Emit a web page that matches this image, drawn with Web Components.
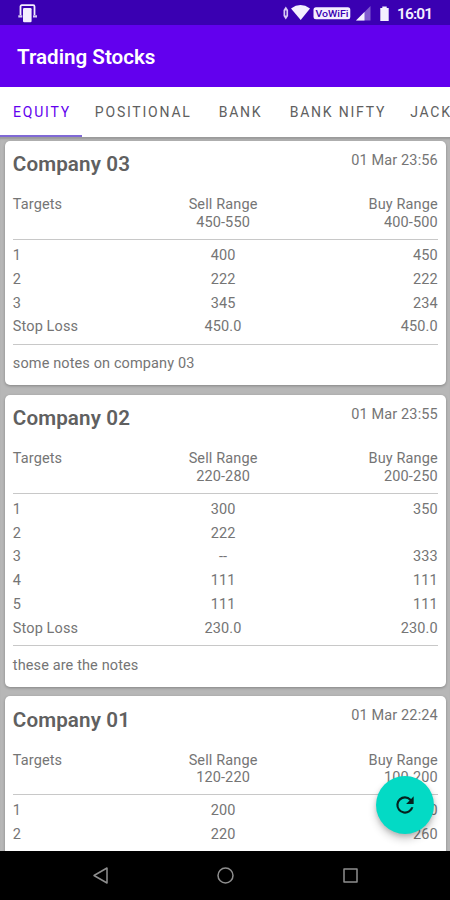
<!DOCTYPE html>
<html lang="en">
<head>
<meta charset="utf-8">
<title>Trading Stocks</title>
<style>
body { margin: 0; font-family: Roboto, "Liberation Sans", sans-serif; }
</style>
</head>
<body>
<trading-app></trading-app>
<script>
const define = (name, html, setup) => {
  const template = document.createElement('template');
  template.innerHTML = html;
  customElements.define(name, class extends HTMLElement {
    constructor() {
      super();
      this.attachShadow({ mode: 'open' }).append(template.content.cloneNode(true));
    }
    connectedCallback() { if (setup) setup(this, this.shadowRoot); }
  });
};

define('status-bar', `
<style>
:host { display: flex; height: 25px; background: #3a00b2; color: #f4efff; }
svg { display: block; width: 450px; height: 25px; }
text { font-family: Roboto, "Liberation Sans", sans-serif; }
</style>
<svg viewBox="0 0 450 25" fill="currentColor">
  <path d="M20.500 15V6.500A1.300 1.300 0 0 1 21.800 5.200h11.400A1.300 1.300 0 0 1 34.500 6.500V15" fill="none" stroke="currentColor" stroke-width="1.800"/>
  <path d="M18.300 15.200h4v2.300h-4zM33 15.200h4v2.300h-4z" opacity=".85"/>
  <rect x="23" y="8" width="8.600" height="14.300" rx="1.200"/>
  <path d="M285.800 6.500l2.300 3.500v6l-2.300 3.500-2.300-3.500v-6z" opacity=".85"/>
  <path d="M285.800 10.500v5" stroke="#3a00b2" stroke-width="1.200"/>
  <path d="M291 8.400Q300.500 1.600 310 8.400L300.700 20z"/>
  <rect x="313.500" y="7.300" width="36.800" height="12" rx="2.500"/>
  <text x="315.500" y="16.800" font-size="9.500" font-weight="500" fill="#3a00b2" textLength="33" lengthAdjust="spacingAndGlyphs">VoWiFi</text>
  <path d="M356 20.500L370.500 6v14.500z" opacity=".38"/>
  <path d="M356 20.500l8.500-8.500v8.500z"/>
  <path d="M380.300 8h2v-1.500h4.400V8h2v13h-8.400z"/>
  <text x="397" y="18.700" font-size="15.500" font-weight="600" textLength="36">16:01</text>
</svg>`);

define('app-bar', `
<style>
:host { display: flex; align-items: center; height: 61.500px; padding: 2px 17px 0; box-sizing: border-box; background: #6200ee; color: #fff; font-size: 20.600px; font-weight: 600; white-space: nowrap; }
</style><slot></slot>`);

define('tab-item', `
<style>
:host { display: flex; flex: none; align-items: center; height: 100%; padding: 1.500px 12.800px 0 13px; box-sizing: border-box; border-bottom: 2.500px solid transparent; color: #606060; font-size: 14px; letter-spacing: 1.780px; white-space: nowrap; }
:host([selected]) { color: #6200ee; border-bottom-color: #8069d5; }
span { margin-right: -1.780px; }
</style><span><slot></slot></span>`);

define('tab-bar', `
<style>
:host { display: flex; height: 50.500px; background: #fff; overflow: hidden; }
</style><slot></slot>`);

define('stock-card', `
<style>
:host { display: block; flex: none; box-sizing: border-box; padding: 0 8px; background: #fff; border-radius: 5px; box-shadow: 0 1px 3px rgba(0,0,0,.28); color: #757575; font-size: 14.500px; line-height: 17.300px; letter-spacing: .12px; }
header { display: flex; justify-content: space-between; height: 55.700px; box-sizing: border-box; padding-top: 11px; white-space: nowrap; }
h2 { margin: -.5px 0 0; color: #606060; font-size: 20.600px; line-height: 26px; font-weight: 600; letter-spacing: .12px; }
.row { display: grid; grid-template-columns: 1fr 1fr 1fr; height: 23.800px; line-height: 23.800px; }
.row > :nth-child(2) { text-align: center; padding-right: 5px; }
.row > :nth-child(3) { text-align: right; }
.row > :nth-child(3), time { margin-right: .5px; }
.ranges { height: 42.500px; line-height: 17.300px; }
.rows { border: solid #c8c8c8; border-width: 1.500px 0; padding: 4.100px 0 4.800px; }
.notes { height: 40.300px; box-sizing: border-box; padding-top: 10.500px; }
#sell, #buy { font-weight: 400; letter-spacing: .12px; }
</style>
<header><h2></h2><time></time></header>
<div class="row ranges"><span>Targets</span><span>Sell Range<br><b id="sell"></b></span><span>Buy Range<br><b id="buy"></b></span></div>
<div class="rows"></div>
<div class="notes"><slot></slot></div>`,
(host, root) => {
  root.querySelector('h2').textContent = host.getAttribute('name');
  root.querySelector('time').textContent = host.getAttribute('time');
  root.getElementById('sell').textContent = host.getAttribute('sell');
  root.getElementById('buy').textContent = host.getAttribute('buy');
  const rows = root.querySelector('.rows');
  rows.replaceChildren(...host.getAttribute('rows').split(';').map(line => {
    const row = document.createElement('div');
    row.className = 'row';
    row.append(...line.split(',').map(value => {
      const cell = document.createElement('span');
      cell.textContent = value;
      return cell;
    }));
    return row;
  }));
});

define('refresh-button', `
<style>
:host { display: flex; align-items: center; justify-content: center; width: 58px; height: 58px; border-radius: 50%; background: #03dac5; box-shadow: 0 5px 9px rgba(0,0,0,.2), 0 2px 4px rgba(0,0,0,.14); }
svg { display: block; }
</style>
<svg width="26" height="26" viewBox="0 0 24 24" fill="#05211e"><path d="M17.650 6.350A7.960 7.960 0 0 0 12 4a8 8 0 1 0 7.730 10h-2.080A6 6 0 1 1 12 6c1.660 0 3.140.69 4.220 1.780L13 11h7V4z"/></svg>`);

define('nav-bar', `
<style>
:host { display: flex; height: 49px; background: #000; }
svg { display: block; }
</style>
<svg width="450" height="49" viewBox="0 0 450 49" fill="none" stroke="#8e8e8e" stroke-width="1.500" stroke-linejoin="round"><path d="M94 24.500L107 17v15z"/><circle cx="225.500" cy="24.500" r="7.500"/><rect x="344" y="18" width="13" height="13"/></svg>`);

define('trading-app', `
<style>
:host { position: relative; display: flex; flex-direction: column; width: 450px; height: 900px; overflow: hidden; }
main { flex: 1; min-height: 0; overflow: hidden; display: flex; flex-direction: column; gap: 9.300px; padding: 3.700px 3.700px 0 4.800px; background: #b7b7b7; box-shadow: inset 0 3px 2px -1px #999; }
refresh-button { position: absolute; left: 375.500px; top: 776px; }
</style>
<status-bar></status-bar>
<app-bar>Trading Stocks</app-bar>
<tab-bar><tab-item selected>EQUITY</tab-item><tab-item>POSITIONAL</tab-item><tab-item style="padding-left:16px;padding-right:16px">BANK</tab-item><tab-item>BANK NIFTY</tab-item><tab-item>JACK</tab-item></tab-bar>
<main>
<stock-card name="Company 03" time="01 Mar 23:56" sell="450-550" buy="400-500" rows="1,400,450;2,222,222;3,345,234;Stop Loss,450.0,450.0">some notes on company 03</stock-card>
<stock-card name="Company 02" time="01 Mar 23:55" sell="220-280" buy="200-250" rows="1,300,350;2,222,;3,--,333;4,111,111;5,111,111;Stop Loss,230.0,230.0">these are the notes</stock-card>
<stock-card name="Company 01" time="01 Mar 22:24" sell="120-220" buy="100-200" rows="1,200,250;2,220,260;"></stock-card>
</main>
<nav-bar></nav-bar>
<refresh-button></refresh-button>`);
</script>
</body>
</html>
